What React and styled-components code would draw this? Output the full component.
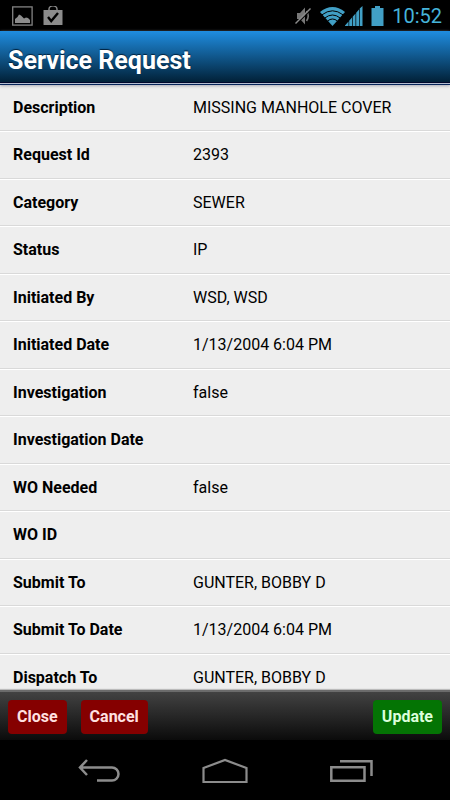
import React from "react";
import styled, { createGlobalStyle } from "styled-components";

const GlobalStyle = createGlobalStyle`
  * { box-sizing: border-box; }
  body {
    margin: 0;
    background: #000;
    font-family: Roboto, "Liberation Sans", sans-serif;
  }
`;

const Screen = styled.div`
  display: flex;
  flex-direction: column;
  height: 100vh;
  background: #000;
`;

const StatusBar = styled.div`
  display: flex;
  flex: none;
  align-items: center;
  justify-content: space-between;
  height: 31px;
  padding: 0 8px 0 12px;
`;

const StatusGroup = styled.div`
  display: flex;
  align-items: center;
  gap: ${(p) => p.$gap}px;
`;

const Clock = styled.time`
  padding-top: 2px;
  color: #46b4da;
  font-size: 20px;
  line-height: 29px;
`;

const Header = styled.header`
  flex: none;
  height: 54px;
  padding: 0 8px;
  background: linear-gradient(#1f8de0, #02233b 50px, #02233b);
  border-bottom: 1px solid #06245a;
  box-shadow: inset 0 -1px #b4bdd0, inset 0 -2px #00072c, 0 1px 3px #a9a9b4;
  z-index: 1;
`;

const Title = styled.h1`
  margin: 0;
  color: #fff;
  font-size: 25px;
  font-weight: 700;
  line-height: 59px;
  text-shadow: 0 -1px 1px #00203c;
`;

const Details = styled.dl`
  flex: 1;
  min-height: 0;
  margin: 0;
  overflow: hidden;
  background: #eee;
`;

const Row = styled.div`
  display: grid;
  grid-template-columns: 2fr 3fr;
  align-items: center;
  height: 47px;
  border-top: 1px solid #fff;
  border-bottom: 1px solid #d9d9d9;
  font-size: 16px;
  line-height: 20px;
  color: #000;

  &:nth-child(even) {
    height: 48px;
  }

  &:first-child {
    height: 46px;
    border-top: 0;
  }
`;

const Label = styled.dt`
  padding-left: 13px;
  font-weight: 700;
`;

const Value = styled.dd`
  margin: 0;
  padding-left: 13px;
`;

const ActionBar = styled.footer`
  display: flex;
  flex: none;
  align-items: center;
  gap: 14px;
  height: 50px;
  padding: 2px 8px 0;
  background: linear-gradient(#424242, #0b0b0b);
  border-top: 2px solid #6b6b6b;
  box-shadow: 0 -1px 1px #bbb;
`;

const ActionButton = styled.button`
  height: 34px;
  padding: 0 9px;
  border: 0;
  border-radius: 4px;
  background: ${(p) => (p.$kind === "confirm" ? "#047404" : "#850000")};
  color: ${(p) => (p.$kind === "confirm" ? "#dcffdc" : "#ffe0e0")};
  font: 700 16px/34px Roboto, "Liberation Sans", sans-serif;
  margin-left: ${(p) => (p.$kind === "confirm" ? "auto" : "0")};
`;

const NavBar = styled.nav`
  display: grid;
  flex: none;
  grid-template-columns: repeat(3, 126px);
  justify-content: center;
  height: 60px;
`;

const NavButton = styled.button`
  display: flex;
  align-items: center;
  justify-content: center;
  padding: 2px 0 0;
  border: 0;
  background: transparent;
  color: #8c8c8c;
`;

const rows = [
  ["Description", "MISSING MANHOLE COVER"],
  ["Request Id", "2393"],
  ["Category", "SEWER"],
  ["Status", "IP"],
  ["Initiated By", "WSD, WSD"],
  ["Initiated Date", "1/13/2004 6:04 PM"],
  ["Investigation", "false"],
  ["Investigation Date", ""],
  ["WO Needed", "false"],
  ["WO ID", ""],
  ["Submit To", "GUNTER, BOBBY D"],
  ["Submit To Date", "1/13/2004 6:04 PM"],
  ["Dispatch To", "GUNTER, BOBBY D"],
];

const PictureIcon = () => (
  <svg width="21" height="20" viewBox="0 0 21 20" aria-hidden="true">
    <rect x="0.7" y="0.9" width="19.4" height="18.2" fill="none" stroke="#838383" strokeWidth="1.3" />
    <path d="M3 17v-4l2.500-2 1.500-2.500 2 1 3 3 2-1 2 .5 2 2v3z" fill="#8c8c8c" />
  </svg>
);

const BagIcon = () => (
  <svg width="20" height="20" viewBox="0 0 20 20" aria-hidden="true">
    <path d="M6 5V3a4 3.200 0 0 1 8 0v2" fill="none" stroke="#8c8c8c" strokeWidth="1.4" />
    <path d="M0.500 4h19v14.500q0 .5-.5.5H1q-.5 0-.5-.5z" fill="#8c8c8c" />
    <path d="M5 11l3.200 4L15 7" fill="none" stroke="#000" strokeWidth="2.400" />
  </svg>
);

const MutedIcon = () => (
  <svg width="17" height="20" viewBox="0 0 17 20" aria-hidden="true">
    <path d="M2 7h3l5-5.500v17L5 13H2z" fill="#777" />
    <path d="M11.500 5q3.500 5 0 10" fill="none" stroke="#777" strokeWidth="1.600" />
    <path d="M1.300 18.300L16.300 3.300" stroke="#000" strokeWidth="1.200" />
    <path d="M0.500 17.500L15.500 2.500" stroke="#8c8c8c" strokeWidth="1.500" />
  </svg>
);

const WifiIcon = () => (
  <svg width="25" height="20" viewBox="0 0 25 20" aria-hidden="true">
    <path d="M0 6Q12.500-4 25 6L12.500 20z" fill="#419fc5" />
    <path d="M2 8.800Q12.500 0.800 23 8.800M4.800 12Q12.500 6 20.200 12M7.500 15Q12.500 11 17.500 15" fill="none" stroke="#000" strokeWidth="1" />
  </svg>
);

const SignalIcon = () => (
  <svg width="18" height="20" viewBox="0 0 18 20" aria-hidden="true">
    <path d="M0 20v-.5L3.500 15.500V20zM4.200 20v-5.200l2.800-3.300V20zM7.700 20V10.800l2.800-3.300V20zM11.200 20V6.700L14 3.500V20zM14.700 20V2.600L17.500 0v20z" fill="#419fc5" />
  </svg>
);

const BatteryIcon = () => (
  <svg width="13" height="20" viewBox="0 0 13 20" aria-hidden="true">
    <path d="M4 0h5v2h3.500v18H.5V2H4z" fill="#419fc5" />
  </svg>
);

const BackIcon = () => (
  <svg width="42" height="24" viewBox="0 0 42 24" fill="none" stroke="currentColor" strokeWidth="2.500" aria-hidden="true">
    <path d="M9 1L2 8.500L9 16M2 8.500H34a6.500 6.500 0 0 1 0 13H19" />
  </svg>
);

const HomeIcon = () => (
  <svg width="46" height="26" viewBox="0 0 46 26" fill="none" stroke="currentColor" strokeWidth="2.200" aria-hidden="true">
    <path d="M1.500 24V10L23 2l21.500 8v14z" />
  </svg>
);

const RecentIcon = () => (
  <svg width="44" height="24" viewBox="0 0 44 24" fill="none" stroke="currentColor" strokeWidth="2.500" aria-hidden="true">
    <path d="M2.300 8.300H35.500v13.500H2.300zM11 2.300H42.500V17" />
  </svg>
);

export default function App() {
  return (
    <Screen>
      <GlobalStyle />
      <StatusBar>
        <StatusGroup $gap={10}>
          <PictureIcon />
          <BagIcon />
        </StatusGroup>
        <StatusGroup $gap={8}>
          <MutedIcon />
          <StatusGroup $gap={0}>
            <WifiIcon />
            <SignalIcon />
          </StatusGroup>
          <BatteryIcon />
          <Clock>10:52</Clock>
        </StatusGroup>
      </StatusBar>
      <Header>
        <Title>Service Request</Title>
      </Header>
      <Details>
        {rows.map(([label, value]) => (
          <Row key={label}>
            <Label>{label}</Label>
            <Value>{value}</Value>
          </Row>
        ))}
      </Details>
      <ActionBar>
        <ActionButton type="button">Close</ActionButton>
        <ActionButton type="button">Cancel</ActionButton>
        <ActionButton type="button" $kind="confirm">Update</ActionButton>
      </ActionBar>
      <NavBar>
        <NavButton type="button" aria-label="Back"><BackIcon /></NavButton>
        <NavButton type="button" aria-label="Home"><HomeIcon /></NavButton>
        <NavButton type="button" aria-label="Recent apps"><RecentIcon /></NavButton>
      </NavBar>
    </Screen>
  );
}
